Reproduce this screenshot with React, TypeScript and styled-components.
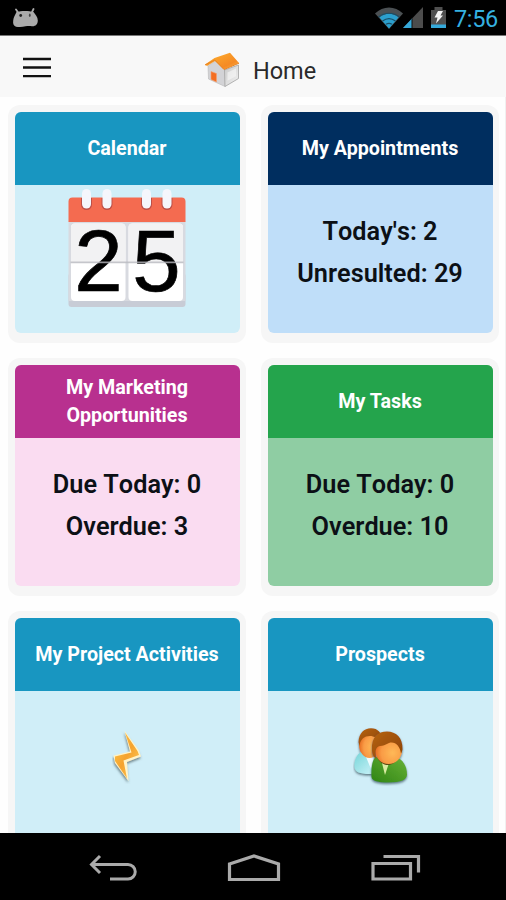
import React from "react";
import styled, { createGlobalStyle } from "styled-components";

const GlobalStyle = createGlobalStyle`
  *, *::before, *::after { box-sizing: border-box; }
  body { margin: 0; background: #fff; font-family: Roboto, sans-serif; }
  svg { display: block; flex: none; }
`;

const Screen = styled.div`
  width: 506px;
  height: 900px;
  display: flex;
  flex-direction: column;
  overflow: hidden;
  background: #fefefe;
`;

const StatusBar = styled.header`
  flex: none;
  height: 36px;
  padding: 0 8px 0 12px;
  display: flex;
  align-items: center;
  justify-content: space-between;
  background: #000;
  border-bottom: 1px solid #777;
`;

const StatusIcons = styled.div`
  display: flex;
  align-items: center;
`;

const BatterySlot = styled.span`
  margin-left: 8px;
`;

const Clock = styled.span`
  width: 44px;
  margin-left: 8px;
  padding-top: 2px;
  font-size: 23.5px;
  line-height: 34px;
  letter-spacing: -0.35px;
  color: #35b1e1;
  white-space: nowrap;
`;

const AppBar = styled.div`
  flex: none;
  height: 61px;
  padding: 0 22px;
  display: grid;
  grid-template-columns: 30px 1fr 30px;
  align-items: center;
  background: #f8f8f8;
`;

const MenuButton = styled.button`
  padding: 2px 0 0;
  border: 0;
  background: none;
`;

const PageTitle = styled.h1`
  margin: 0;
  padding-left: 14px;
  display: flex;
  align-items: center;
  justify-content: center;
  gap: 12px;
  font-size: 23.5px;
  font-weight: 400;
  line-height: 28px;
  color: #2a2a2a;

  span { padding-top: 9px; }
  svg { margin-top: 6px; }
`;

const Dashboard = styled.main`
  flex: 1;
  min-height: 0;
  overflow: hidden;
  padding: 8px 6px 0 8px;
  display: grid;
  grid-template-columns: 238px 238px;
  grid-auto-rows: 238px;
  gap: 15px;
  border-right: 1px solid #f0f0f0;
`;

const Card = styled.section`
  padding: 6.5px 6.5px 10.5px;
  border-radius: 12px;
  background: #f6f6f6;
`;

const CardSurface = styled.div<{ $tone: string }>`
  height: 100%;
  display: flex;
  flex-direction: column;
  border-radius: 6px;
  overflow: hidden;
  background: ${(p) => p.$tone};
`;

const CardTitle = styled.h2<{ $tone: string }>`
  flex: none;
  height: 73px;
  margin: 0;
  padding: 2px 16px 0;
  display: flex;
  align-items: center;
  justify-content: center;
  background: ${(p) => p.$tone};
  color: #fff;
  font-size: 19.7px;
  font-weight: 700;
  line-height: 28px;
  text-align: center;
`;

const CardBody = styled.div`
  flex: 1;
  display: flex;
  flex-direction: column;
  align-items: center;
`;

const Figure = styled.div<{ $top: number; $shift: number }>`
  margin-top: ${(p) => p.$top}px;
  padding-left: ${(p) => p.$shift}px;
`;

const Stats = styled.div`
  padding-top: 26px;
`;

const Stat = styled.p`
  margin: 0;
  font-size: 25.3px;
  font-weight: 600;
  font-kerning: none;
  line-height: 42px;
  text-align: center;
  color: #0c1016;
  white-space: nowrap;
`;

const NavBar = styled.nav`
  flex: none;
  height: 67px;
  padding: 3px 85px 0 89px;
  display: flex;
  justify-content: space-between;
  align-items: center;
  background: #000;
`;

const DroidIcon = () => (
  <svg width="27" height="20" viewBox="0 0 27 20">
    <path d="M4 1.500l2.300 3.200M21.500 1l-1.800 3.700" stroke="#aaa" strokeWidth="1.800" strokeLinecap="round" />
    <path d="M4.500 4C9 2.500 17 2.500 21.500 4c2 2.500 4.300 5 4.300 8.500 0 4-2.500 6-5.800 5.700-2.500-.4-4-.4-6.500.1-3 .8-6.500.8-9.500.4C1.500 18 .8 15.500 1.200 12.500 1.500 9.500 3 7 4.500 4Z" fill="#aaa" />
    <circle cx="8.700" cy="7.500" r="1.400" fill="#222" />
    <ellipse cx="17.800" cy="7.200" rx=".9" ry="1.700" fill="#444" />
  </svg>
);

const WifiIcon = () => (
  <svg width="28" height="22" viewBox="0 0 28 22">
    <path d="M0 6.500C8-1.500 20-1.500 28 6.500L14 22Z" fill="#4b5053" />
    <path d="M4.500 10.500C10 5.500 18 5.500 23.500 10.500L14 21.500Z" fill="#2b9fcd" />
    <path d="M3.500 10c6-5 15-5 21 0M7.500 14c4-3 9-3 13 0M11 17.300c2-1.200 4-1.200 6 0" fill="none" stroke="#194d65" strokeWidth="1.200" />
  </svg>
);

const SignalIcon = () => (
  <svg width="20" height="21" viewBox="0 0 20 21">
    <path d="M0 21 20 0V21Z" fill="#4c4c4c" />
    <path d="M0 21 9 11.500V21Z" fill="#35a9da" />
    <path d="M9 11.500V21" stroke="#111" />
  </svg>
);

const BatteryIcon = () => (
  <svg width="15" height="21" viewBox="0 0 15 21">
    <path d="M0 3h3.500V0h8v3H15v18H0Z" fill="#505050" />
    <path d="M0 17.500h15V21H0Z" fill="#35a9da" />
    <path d="M7 4h5L9.500 8.500H12L5 16.500l1.500-6H3.500Z" fill="#f5f5f5" />
  </svg>
);

const MenuIcon = () => (
  <svg width="30" height="22" viewBox="0 0 30 22">
    <path d="M1 2H29M1 10.500H29M1 19.200H29" stroke="#111" strokeWidth="2.300" />
  </svg>
);

const HouseIcon = () => (
  <svg width="37" height="36" viewBox="0 0 37 36">
    <defs>
      <linearGradient id="roof" x1="0" y1="0" x2="1" y2="1">
        <stop offset="0" stopColor="#ffb22f" />
        <stop offset=".7" stopColor="#f58a24" />
        <stop offset="1" stopColor="#ffbb4c" />
      </linearGradient>
      <linearGradient id="wall" x1="0" y1="0" x2="1" y2="1">
        <stop offset="0" stopColor="#c9c9c9" />
        <stop offset="1" stopColor="#f3f3f3" />
      </linearGradient>
    </defs>
    <path d="M4 14 13 8 21 18V34.500L4.500 27Z" fill="#d3d3d6" stroke="#b8b8b8" strokeWidth=".6" />
    <path d="M20.500 18 34.500 13V26.500L21 34.500Z" fill="url(#wall)" stroke="#aaa" strokeWidth=".9" />
    <path d="M23.500 20.500 32 16.500v7.800l-8.500 4.500Z" fill="#f6f6f6" opacity=".65" />
    <path d="M7 19.500 12.500 21.500V30L7 27.500Z" fill="#f36e22" stroke="#f6a06e" strokeWidth=".6" />
    <path d="M1 12.500 10.500 6 26 .8 35 11 20 17.500 11 9 3 14Z" fill="url(#roof)" />
    <path d="M1 13 10.800 8 20 17.500 35 11.200" fill="none" stroke="#e98423" strokeWidth="1" />
  </svg>
);

const RINGS = [18.5, 39, 78.5, 99];

const CalendarIcon = () => (
  <svg width="118" height="120" viewBox="0 0 118 120">
    <rect x=".5" y="84" width="117" height="34" rx="3" fill="#c8ccd6" />
    <path d="M.5 32h117v80H.5Z" fill="#d8dae0" />
    <path d="M.5 33V12.500a4 4 0 0 1 4-4h109a4 4 0 0 1 4 4v20.500Z" fill="#f46b50" />
    {[3, 60.5].map((x) => (
      <g key={x}>
        <rect x={x} y="34.500" width="54.500" height="77.500" rx="4" fill="#fff" />
        <path d={`M${x} 73.500V38.500a4 4 0 0 1 4-4h46.500a4 4 0 0 1 4 4v35Z`} fill="#f2f2f3" />
      </g>
    ))}
    {RINGS.map((x) => (
      <g key={x}>
        <path d={`M${x - 5.5} 9h11v6.500a5.500 5.500 0 0 1-11 0Z`} fill="#bd5048" />
        <rect x={x - 4.5} y="0" width="9" height="19.500" rx="4.500" fill="#f5f6fc" />
      </g>
    ))}
    <g fontFamily="'Liberation Sans', Arial, sans-serif" fontSize="87" textAnchor="middle" fill="#000" stroke="#000" strokeWidth=".7">
      <text x="30.500" y="101.500">2</text>
      <text x="88.500" y="101.500">5</text>
    </g>
    <path d="M2.500 73.300H115.500" stroke="#b9bac0" strokeWidth="1.800" opacity=".8" />
  </svg>
);

const BoltIcon = () => (
  <svg width="32" height="54" viewBox="0 0 32 54">
    <defs>
      <linearGradient id="bolt" x1="0" y1="0" x2="1" y2="1">
        <stop offset="0" stopColor="#ffc94c" />
        <stop offset=".5" stopColor="#f5a32f" />
        <stop offset="1" stopColor="#ffd05c" />
      </linearGradient>
      <filter id="boltShadow" x="-30%" y="-30%" width="160%" height="160%">
        <feDropShadow dx="-.5" dy="2" stdDeviation="1" floodColor="#52656b" floodOpacity=".75" />
      </filter>
    </defs>
    <path filter="url(#boltShadow)" d="M12.500 .5 27 20.500 29 26.500 15 32 16.500 51 3 33 1.500 25.500 18 21.500Z" fill="#fff3c8" />
    <path d="M13 2.500 25.500 21 27 25 11.500 30.500 15 48.500 3 31 3 26.500 19.500 22.500Z" fill="url(#bolt)" />
  </svg>
);

const PeopleIcon = () => (
  <svg width="56" height="58" viewBox="0 0 56 58">
    <defs>
      <radialGradient id="skin" cx=".65" cy=".6" r=".65">
        <stop offset="0" stopColor="#ffb957" />
        <stop offset=".65" stopColor="#f99b45" />
        <stop offset="1" stopColor="#e56b20" />
      </radialGradient>
      <linearGradient id="hair" x1="0" y1="0" x2="1" y2="1">
        <stop offset="0" stopColor="#b66310" />
        <stop offset="1" stopColor="#8b4203" />
      </linearGradient>
      <linearGradient id="green" x1="0" y1="1" x2="1" y2="0">
        <stop offset="0" stopColor="#2e8413" />
        <stop offset="1" stopColor="#69b238" />
      </linearGradient>
      <linearGradient id="aqua" x1="0" y1="0" x2="1" y2="1">
        <stop offset="0" stopColor="#75d5d8" />
        <stop offset="1" stopColor="#d3f5fc" />
      </linearGradient>
      <filter id="peopleShadow" x="-20%" y="-20%" width="140%" height="150%">
        <feDropShadow dx="0" dy="1.500" stdDeviation="1" floodColor="#3a5862" floodOpacity=".8" />
      </filter>
    </defs>
    <g filter="url(#peopleShadow)">
      <path d="M8 24C3 27 1 34 1.500 39c.5 5 5 7 15 7h9V27Z" fill="url(#aqua)" />
      <path d="M13 29l5 12 3-12Z" fill="#effcff" />
      <ellipse cx="16.500" cy="16.500" rx="10.500" ry="13.500" fill="url(#skin)" />
      <path d="M5.500 14C6 5 11 .2 18 .2S29 5 29 12v4C24 8 18 7 13 8.500c-4 1.500-6 5-6.500 9.500Z" fill="url(#hair)" />
    </g>
    <g filter="url(#peopleShadow)">
      <path d="M23 29C19 31 18 42 18.500 49c.5 4 6 5.500 17 5.500 13 0 18.500-3 18.500-8 0-9-5-15-9-16.500Z" fill="url(#green)" />
      <path d="M29 35 32 47 36 35Z" fill="#d9eca1" />
      <path d="M24 29C28 39 40 40 45 30Z" fill="#5c4d15" />
      <ellipse cx="35.500" cy="22" rx="13.500" ry="14" fill="url(#skin)" />
      <path d="M19 22C18 9 25 3.500 34 3.500s16 6 15.500 18c-.5 2-1 3-1.500 4C47 18 42 13 36 15c-4 2-6 3-9 3-5 1-5 6-3.500 13C20 28 19 26 19 22Z" fill="url(#hair)" />
    </g>
  </svg>
);

const BackIcon = () => (
  <svg width="48" height="28" viewBox="0 0 48 28">
    <path d="M11 2 2.500 10.500 11 19M3 10.500H39a7.200 7.200 0 0 1 0 14.500H21" fill="none" stroke="#aaa" strokeWidth="3" />
  </svg>
);

const HomeOutlineIcon = () => (
  <svg width="54" height="30" viewBox="0 0 54 30">
    <path d="M2.500 11 27 3 51.500 11V26.500h-49Z" fill="none" stroke="#aaa" strokeWidth="3.200" />
  </svg>
);

const RecentIcon = () => (
  <svg width="50" height="28" viewBox="0 0 50 28">
    <path d="M2 9.500H39.500V25H2ZM12.500 2.500H47.500V18.500" fill="none" stroke="#aaa" strokeWidth="3.200" />
  </svg>
);

type CardData = {
  title: React.ReactNode;
  head: string;
  body: string;
  stats?: string[];
  icon?: React.ReactNode;
  iconTop?: number;
  iconShift?: number;
};

const CARDS: CardData[] = [
  { title: "Calendar", head: "#1896c1", body: "#d0eef8", icon: <CalendarIcon />, iconTop: 4 },
  { title: "My Appointments", head: "#002e5f", body: "#bfdef9", stats: ["Today's: 2", "Unresulted: 29"] },
  { title: <>My Marketing<br />Opportunities</>, head: "#b8308f", body: "#fadcf1", stats: ["Due Today: 0", "Overdue: 3"] },
  { title: "My Tasks", head: "#24a44c", body: "#8fcda3", stats: ["Due Today: 0", "Overdue: 10"] },
  { title: "My Project Activities", head: "#1896c1", body: "#d0eef8", icon: <BoltIcon />, iconTop: 39, iconShift: 2 },
  { title: "Prospects", head: "#1896c1", body: "#d0eef8", icon: <PeopleIcon />, iconTop: 37, iconShift: 2 },
];

export default function App() {
  return (
    <Screen>
      <GlobalStyle />
      <StatusBar>
        <DroidIcon />
        <StatusIcons>
          <WifiIcon />
          <SignalIcon />
          <BatterySlot><BatteryIcon /></BatterySlot>
          <Clock>7:56</Clock>
        </StatusIcons>
      </StatusBar>
      <AppBar>
        <MenuButton aria-label="Menu"><MenuIcon /></MenuButton>
        <PageTitle><HouseIcon /><span>Home</span></PageTitle>
      </AppBar>
      <Dashboard>
        {CARDS.map((card, i) => (
          <Card key={i}>
            <CardSurface $tone={card.body}>
              <CardTitle $tone={card.head}><span>{card.title}</span></CardTitle>
              <CardBody>
                {card.icon && <Figure $top={card.iconTop ?? 0} $shift={card.iconShift ?? 0}>{card.icon}</Figure>}
                {card.stats && <Stats>{card.stats.map((s) => <Stat key={s}>{s}</Stat>)}</Stats>}
              </CardBody>
            </CardSurface>
          </Card>
        ))}
      </Dashboard>
      <NavBar>
        <BackIcon />
        <HomeOutlineIcon />
        <RecentIcon />
      </NavBar>
    </Screen>
  );
}
